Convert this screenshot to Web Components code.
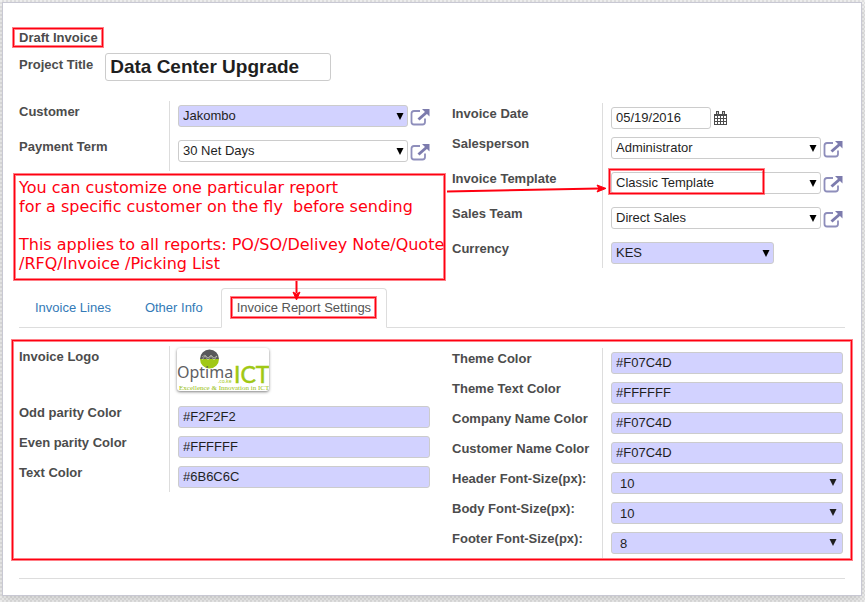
<!DOCTYPE html>
<html lang="en">
<head>
<meta charset="utf-8">
<title>Draft Invoice</title>
<style>
  html { background: repeating-conic-gradient(#e2e2e2 0 25%, #f2f2f2 0 50%) 0 0 / 4px 4px; }
  body {
    margin: 0;
    padding: 2px 3px 6px 2px;
    font: 13px/16px "Liberation Sans", Arial, sans-serif;
    color: #4c4c4c;
    --mark: #ff0010;
    --mark-soft: #ff001080;
    --line: #dddddd;
    --required: #d2d2ff;
  }
</style>
</head>
<body>
<invoice-sheet></invoice-sheet>

<template id="sheet-template">
  <style>
    :host {
      display: block;
      background: #fff;
      border: 1px solid #c8c8d3;
      box-shadow: 0 4px 10px #00000026;
      padding: 27px 16px 16px;
    }
    h1 { margin: 0; font-size: 13px; line-height: 16px; }
    .title { display: flex; gap: 12px; margin-top: 7px; align-items: flex-start; }
    .title label { font-weight: bold; padding-top: 4px; }
    .title input {
      box-sizing: border-box; width: 226px; height: 28px; margin: 0; padding: 0 4px;
      border: 1px solid #ccc; border-radius: 3px; background: #fff;
      font: bold 19px/26px "Liberation Sans", Arial, sans-serif; color: #1f1f1f;
    }
    .area { position: relative; }
    .groups {
      display: grid; grid-template-columns: 411fr 391fr; gap: 22px;
      align-items: start; padding-right: 2px;
    }
    .groups > :last-child { margin-top: 2px; }
    .header { margin-top: 20px; }
    tab-bar { margin-top: 20px; }
    .settings { padding-top: 18px; }
    .settings::after {
      content: ""; position: absolute; inset: 12px -7px -2px; pointer-events: none;
      border: 1px solid var(--mark); outline: 1px solid var(--mark-soft);
      box-shadow: inset 0 0 0 1px var(--mark-soft);
    }
    hr { margin: 20px 0 0; border: 0; border-top: 1px solid var(--line); }
    note-callout { position: absolute; left: -5px; top: 73px; z-index: 1; }
    .arrow { position: absolute; overflow: visible; pointer-events: none; z-index: 1; fill: var(--mark); stroke: var(--mark); }
    .across { left: 428px; top: 80px; }
    .down { left: 270px; top: 180px; }
  </style>
  <h1><red-mark>Draft Invoice</red-mark></h1>
  <div class="title">
    <label for="project">Project Title</label>
    <input id="project" type="text" value="Data Center Upgrade">
  </div>
  <div class="area header">
    <div class="groups">
      <div>
        <form-field kind="relation" label="Customer" value="Jakombo" required></form-field>
        <form-field kind="relation" label="Payment Term" value="30 Net Days"></form-field>
      </div>
      <div>
        <form-field kind="date" label="Invoice Date" value="05/19/2016"></form-field>
        <form-field kind="relation" label="Salesperson" value="Administrator"></form-field>
        <form-field kind="relation" label="Invoice Template" value="Classic Template" marked></form-field>
        <form-field kind="relation" label="Sales Team" value="Direct Sales"></form-field>
        <form-field kind="short" label="Currency" value="KES" required></form-field>
      </div>
    </div>
    <note-callout>You can customize one particular report
for a specific customer on the fly  before sending

This applies to all reports: PO/SO/Delivey Note/Quote
/RFQ/Invoice /Picking List</note-callout>
    <svg class="arrow across" width="160" height="16" viewBox="0 0 160 16" aria-hidden="true">
      <path d="M0 10.500L152 7.500" stroke-width="2" fill="none"/>
      <path d="M150 4L159 7.400L150 11L152 7.500Z" stroke-width="1"/>
    </svg>
    <svg class="arrow down" width="16" height="20" viewBox="0 0 16 20" aria-hidden="true">
      <path d="M7.500 0V12" stroke-width="2" fill="none"/>
      <path d="M4 11L7.500 19L11 11L7.500 13Z" stroke-width="1"/>
    </svg>
  </div>
  <tab-bar>
    <tab-item>Invoice Lines</tab-item>
    <tab-item>Other Info</tab-item>
    <tab-item active><red-mark>Invoice Report Settings</red-mark></tab-item>
  </tab-bar>
  <div class="area settings">
    <div class="groups">
      <div>
        <form-field kind="slot" label="Invoice Logo"><company-logo></company-logo></form-field>
        <form-field label="Odd parity Color" value="#F2F2F2" required></form-field>
        <form-field label="Even parity Color" value="#FFFFFF" required></form-field>
        <form-field label="Text Color" value="#6B6C6C" required></form-field>
      </div>
      <div>
        <form-field label="Theme Color" value="#F07C4D" required></form-field>
        <form-field label="Theme Text Color" value="#FFFFFF" required></form-field>
        <form-field label="Company Name Color" value="#F07C4D" required></form-field>
        <form-field label="Customer Name Color" value="#F07C4D" required></form-field>
        <form-field kind="select" label="Header Font-Size(px):" value="10" required></form-field>
        <form-field kind="select" label="Body Font-Size(px):" value="10" required></form-field>
        <form-field kind="select" label="Footer Font-Size(px):" value="8" required></form-field>
      </div>
    </div>
  </div>
  <hr>
</template>

<template id="field-template">
  <style>
    :host { display: grid; grid-template-columns: 150px minmax(0, 1fr); }
    label, .name { font-weight: bold; padding-top: 3px; white-space: nowrap; }
    .cell { display: flex; align-items: flex-start; border-left: 1px solid var(--line); padding: 4px 0 4px 8px; }
    :host([kind="relation"]) .cell { padding-bottom: 9px; }
    :host([kind="slot"]) .cell { padding: 1px 0 9px 6px; }
    .box { position: relative; flex: 1; display: grid; min-width: 0; }
    :host([kind="date"]) .box { flex: 0 0 100px; }
    :host([kind="short"]) .box { flex: 0 0 163px; }
    input, select {
      grid-area: 1 / 1; box-sizing: border-box; width: 100%; height: 22px; margin: 0; padding: 0 4px;
      border: 1px solid #ccc; border-radius: 3px; background: #fff; appearance: none;
      font: 13px/16px "Liberation Sans", Arial, sans-serif; color: #1f1f1f;
    }
    input { padding-bottom: 2px; }
    :host([required]) input, :host([required]) select { background: var(--required); }
    :host([kind="select"]) select { padding: 1px 8px 0; }
    .caret { grid-area: 1 / 1; justify-self: end; align-self: center; margin-right: 4px; pointer-events: none; fill: #000; }
    :host([kind="select"]) .caret { margin: 0 6px 3px 0; fill: #1f1f1f; }
    button { flex: none; margin: 0; padding: 0; border: 0; background: none; display: block; }
    .open { margin: 3px 0 0 2px; height: 18px; }
    .pick { margin: 4px 0 0 3px; height: 14px; }
    svg { display: block; }
    :host([marked]) .box::after {
      content: ""; position: absolute; left: -2px; top: -3px; width: 153px; height: 23px; pointer-events: none;
      border: 1px solid var(--mark); outline: 1px solid var(--mark-soft);
      box-shadow: inset 0 0 0 1px var(--mark-soft);
    }
  </style>
</template>

<template id="logo-template">
  <style>
    :host { display: block; width: 94px; height: 46px; }
    svg { display: block; margin: 1px; width: 92px; height: 43px; border-radius: 3px; background: #fff; box-shadow: 0 1px 3px #00000080; }
  </style>
  <svg viewBox="0 0 92 43" role="img" aria-label="Optima ICT">
    <path d="M23 11a9.500 9.500 0 0 1 19 0z" fill="#58585a"/>
    <path d="M23 11a9.500 9.500 0 0 0 19 0z" fill="#a0c814"/>
    <path d="M25 12l3-4 3 4 3-4 3 4 3-4M25 9l3-2 3 3 3-3 3 3 3-2" fill="none" stroke="#d5d5c8" stroke-width=".6"/>
    <text x="0" y="30" font-family="Noto Sans, sans-serif" font-size="16" fill="#5f6062">Optima</text>
    <text x="57" y="35" font-family="Lato, sans-serif" font-size="23" fill="#a0c814" stroke="#a0c814" stroke-width=".5">ICT</text>
    <text x="41" y="35" font-family="Noto Sans, sans-serif" font-size="5" fill="#a0c814">.co.ke</text>
    <text x="2" y="42" font-family="Liberation Serif, serif" font-size="7" fill="#98c010">Excellence &amp; Innovation in ICT</text>
  </svg>
</template>

<script>
  const cloneOf = id => document.getElementById(id).content.cloneNode(true);

  const CARET = '<svg class="caret" width="8" height="8" viewBox="0 0 8 8" aria-hidden="true"><path d="M.5 1H7.500L4 8Z"/></svg>';
  const OPEN = `<button class="open" type="button" aria-label="Open record"><svg width="20" height="18" viewBox="0 0 20 18">
    <path d="M10 3H4Q1.500 3 1.500 5.500V14Q1.500 16.500 4 16.500H12.500Q15 16.500 15 14V10.500" fill="none" stroke="#8e8ebb" stroke-width="1.800"/>
    <path d="M8.500 11.500L17 4" fill="none" stroke="#7c7bad" stroke-width="3"/><path d="M12 1H19.500V8.500Z" fill="#7c7bad"/></svg></button>`;
  const CALENDAR = `<button class="pick" type="button" aria-label="Choose date"><svg width="13" height="14" viewBox="0 0 13 14">
    <path d="M0 3H13V14H0Z" fill="#4c4c4c"/><path d="M2 0H5V4H2ZM8 0H11V4H8Z" fill="#4c4c4c"/>
    <path d="M3 1H4V3H3ZM9 1H10V3H9Z" fill="#ccc"/>
    <path d="M1 5h2v2h-2zM4 5h2v2h-2zM7 5h2v2h-2zM10 5h2v2h-2zM1 8h2v2h-2zM4 8h2v2h-2zM7 8h2v2h-2zM10 8h2v2h-2zM1 11h2v2h-2zM4 11h2v2h-2zM7 11h2v2h-2zM10 11h2v2h-2z" fill="#fff"/></svg></button>`;

  customElements.define('red-mark', class extends HTMLElement {
    constructor() {
      super();
      this.attachShadow({ mode: 'open' }).innerHTML = `<style>
        :host { display: inline-block; position: relative; }
        :host::after {
          content: ""; position: absolute; inset: -2px -5px -1px -6px; pointer-events: none;
          border: 1px solid var(--mark); outline: 1px solid var(--mark-soft);
          box-shadow: inset 0 0 0 1px var(--mark-soft);
        }</style><slot></slot>`;
    }
  });

  customElements.define('note-callout', class extends HTMLElement {
    constructor() {
      super();
      this.attachShadow({ mode: 'open' }).innerHTML = `<style>
        :host {
          display: block; box-sizing: border-box; padding: 3px 0 6px 4px; white-space: pre;
          font: 16px/19px "DejaVu Sans", sans-serif; color: var(--mark); background: #fff;
          border: 1px solid var(--mark); outline: 1px solid var(--mark-soft);
          box-shadow: inset 0 0 0 1px var(--mark-soft);
        }</style><slot></slot>`;
    }
  });

  customElements.define('tab-bar', class extends HTMLElement {
    constructor() {
      super();
      this.attachShadow({ mode: 'open' }).innerHTML = `<style>
        :host { display: flex; gap: 2px; border-bottom: 1px solid var(--line); }
        </style><slot></slot>`;
    }
  });

  customElements.define('tab-item', class extends HTMLElement {
    constructor() {
      super();
      this.attachShadow({ mode: 'open' }).innerHTML = `<style>
        :host { display: block; margin-bottom: -1px; }
        a {
          display: block; padding: 10px 15px; line-height: 18px; color: #337ab7; text-decoration: none;
          border: 1px solid transparent; border-radius: 4px 4px 0 0;
        }
        :host([active]) a { color: #555; background: #fff; border-color: var(--line) var(--line) #fff; }
        </style><a href="#"><slot></slot></a>`;
    }
  });

  customElements.define('company-logo', class extends HTMLElement {
    constructor() {
      super();
      this.attachShadow({ mode: 'open' }).append(cloneOf('logo-template'));
    }
  });

  customElements.define('form-field', class extends HTMLElement {
    connectedCallback() {
      if (this.shadowRoot) return;
      const kind = this.getAttribute('kind') || 'text';
      const label = this.getAttribute('label');
      const value = this.getAttribute('value');
      const root = this.attachShadow({ mode: 'open' });
      root.append(cloneOf('field-template'));
      let control;
      if (kind === 'slot') control = '<slot></slot>';
      else if (kind === 'text' || kind === 'date') control = `<div class="box"><input id="control" type="text" value="${value}"></div>`;
      else control = `<div class="box"><select id="control"><option>${value}</option></select>${CARET}</div>`;
      const extra = kind === 'relation' ? OPEN : kind === 'date' ? CALENDAR : '';
      const name = kind === 'slot' ? `<span class="name">${label}</span>` : `<label for="control">${label}</label>`;
      const holder = document.createElement('template');
      holder.innerHTML = `${name}<div class="cell">${control}${extra}</div>`;
      root.append(holder.content);
    }
  });

  customElements.define('invoice-sheet', class extends HTMLElement {
    constructor() {
      super();
      this.attachShadow({ mode: 'open' }).append(cloneOf('sheet-template'));
    }
  });
</script>
</body>
</html>
